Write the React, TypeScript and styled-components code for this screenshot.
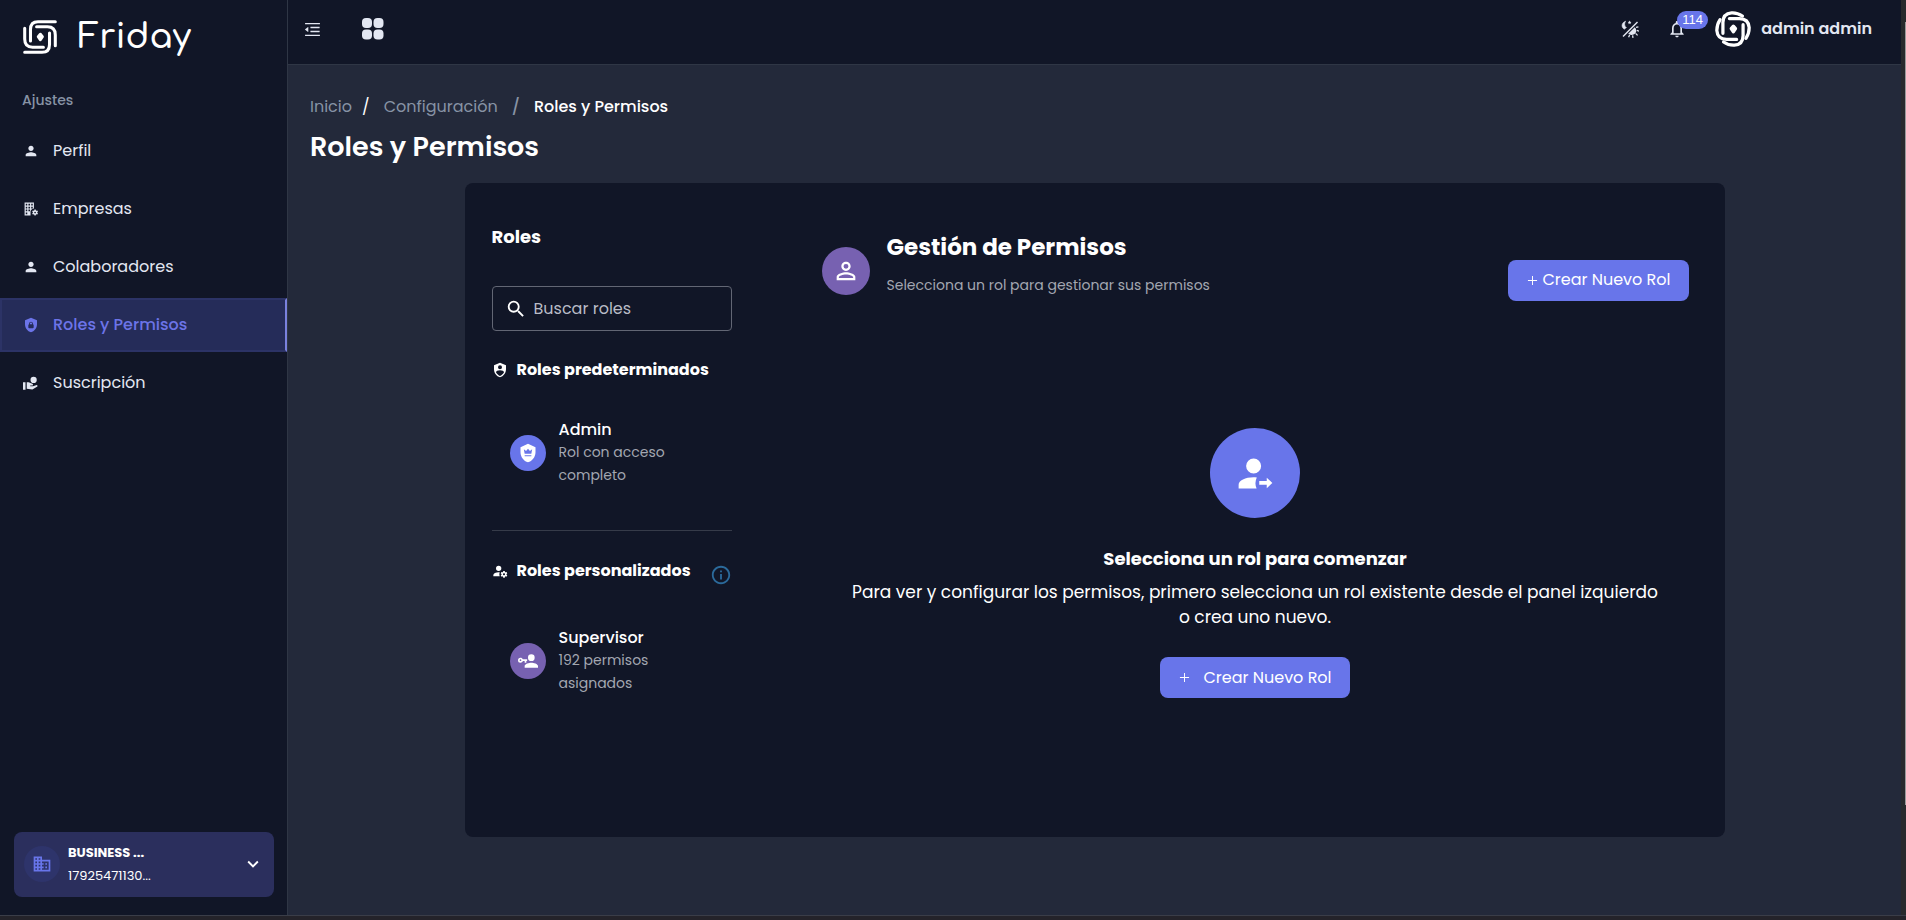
import React from 'react';
import styled, { createGlobalStyle } from 'styled-components';
import {
  MdPerson,
  MdSearch,
  MdOutlineInfo,
  MdNotificationsNone,
  MdDomain,
  MdKeyboardArrowDown,
  MdPersonOutline,
} from 'react-icons/md';
import { AiOutlineMenuFold, AiOutlinePlus } from 'react-icons/ai';

const color = {
  surface: '#111627',
  page: '#23293a',
  line: '#2f3645',
  primary: '#6875ea',
  accent: '#7761b1',
  text: '#ffffff',
  soft: '#e3e7f2',
  muted: '#a3a7b1',
  faint: '#8793a5',
};

const GlobalStyle = createGlobalStyle`
  *, *::before, *::after { box-sizing: border-box; }
  body {
    margin: 0;
    background: ${color.page};
    color: ${color.text};
    font-family: Poppins, Inter, "Liberation Sans", sans-serif;
    font-size: 16px;
    line-height: 24px;
  }
  h1, h2, h3, p, ul, ol { margin: 0; padding: 0; }
  ul, ol { list-style: none; }
  a { color: inherit; text-decoration: none; }
  button { font: inherit; color: inherit; border: 0; background: none; padding: 0; cursor: pointer; }
  svg { display: block; flex: none; }
`;

/* ---------- icons ---------- */

type IconProps = { size?: number };

const Glyph = ({ size = 16, d, children }: IconProps & { d?: string; children?: React.ReactNode }) => (
  <svg width={size} height={size} viewBox="0 0 24 24" fill="currentColor" fillRule="evenodd" aria-hidden="true">
    {d && <path d={d} />}
    {children}
  </svg>
);

const SHIELD = 'M12 1L3 5V11C3 16.55 6.84 21.74 12 23C17.16 21.74 21 16.55 21 11V5L12 1';

const COG =
  'M17 12C16.87 12 16.76 12.09 16.74 12.21L16.55 13.53C16.25 13.66 15.96 13.82 15.7 14L14.46 13.5C14.35 13.5 14.22 13.5 14.15 13.63L13.15 15.36C13.09 15.47 13.11 15.6 13.21 15.68L14.27 16.5C14.25 16.67 14.24 16.83 14.24 17C14.24 17.17 14.25 17.33 14.27 17.5L13.21 18.32C13.12 18.4 13.09 18.53 13.15 18.64L14.15 20.37C14.21 20.5 14.34 20.5 14.46 20.5L15.7 20C15.96 20.18 16.24 20.35 16.55 20.47L16.74 21.79C16.76 21.91 16.86 22 17 22H19C19.11 22 19.22 21.91 19.24 21.79L19.43 20.47C19.73 20.34 20 20.18 20.27 20L21.5 20.5C21.63 20.5 21.76 20.5 21.83 20.37L22.83 18.64C22.89 18.53 22.86 18.4 22.77 18.32L21.7 17.5C21.72 17.33 21.74 17.17 21.74 17C21.74 16.83 21.73 16.67 21.7 16.5L22.76 15.68C22.85 15.6 22.88 15.47 22.82 15.36L21.82 13.63C21.76 13.5 21.63 13.5 21.5 13.5L20.27 14C20 13.82 19.73 13.65 19.42 13.53L19.23 12.21C19.22 12.09 19.11 12 19 12H17M18 15.5C18.83 15.5 19.5 16.17 19.5 17C19.5 17.83 18.83 18.5 18 18.5C17.16 18.5 16.5 17.83 16.5 17C16.5 16.17 17.17 15.5 18 15.5Z';

const ShieldLock = (p: IconProps) => (
  <Glyph
    {...p}
    d={`${SHIELD}M12 7C13.4 7 14.8 8.1 14.8 9.5V11C15.4 11 16 11.6 16 12.3V15.8C16 16.4 15.4 17 14.7 17H9.2C8.6 17 8 16.4 8 15.7V12.2C8 11.6 8.6 11 9.2 11V9.5C9.2 8.1 10.6 7 12 7M12 8.2C11.2 8.2 10.5 8.7 10.5 9.5V11H13.5V9.5C13.5 8.7 12.8 8.2 12 8.2Z`}
  />
);

const ShieldCrown = (p: IconProps) => (
  <Glyph {...p} d={`${SHIELD}M16 16H8V14.6H16V16M16 13H8L7 7.6L9.67 9.6L12 7L14.33 9.6L17 7.6L16 13Z`} />
);

const ShieldAccount = (p: IconProps) => (
  <Glyph
    {...p}
    d={`${SHIELD}M12 5A3 3 0 0 1 15 8A3 3 0 0 1 12 11A3 3 0 0 1 9 8A3 3 0 0 1 12 5M17.13 17C15.92 18.85 14.11 20.24 12 20.92C9.89 20.24 8.08 18.85 6.87 17C6.53 16.5 6.24 16 6 15.47C6 13.82 8.71 12.47 12 12.47C15.29 12.47 18 13.79 18 15.47C17.76 16 17.47 16.5 17.13 17Z`}
  />
);

const AccountCog = (p: IconProps) => (
  <Glyph
    {...p}
    d={`M10 4A4 4 0 0 0 6 8A4 4 0 0 0 10 12A4 4 0 0 0 14 8A4 4 0 0 0 10 4M10 14C5.58 14 2 15.79 2 18V20H11.68A7 7 0 0 1 11 17A7 7 0 0 1 11.64 14.09C11.11 14.03 10.56 14 10 14${COG}`}
  />
);

const AccountKey = (p: IconProps) => (
  <Glyph
    {...p}
    d="M11 10V12H10V14H8V12H5.83C5.42 13.17 4.31 14 3 14A3 3 0 0 1 0 11A3 3 0 0 1 3 8C4.31 8 5.42 8.83 5.83 10H11M3 10A1 1 0 0 0 2 11A1 1 0 0 0 3 12A1 1 0 0 0 4 11A1 1 0 0 0 3 10M16 14C18.67 14 24 15.34 24 18V20H8V18C8 15.34 13.33 14 16 14M16 12A4 4 0 0 1 12 8A4 4 0 0 1 16 4A4 4 0 0 1 20 8A4 4 0 0 1 16 12Z"
  />
);

const AccountArrow = (p: IconProps) => (
  <Glyph
    {...p}
    d="M11 4A4 4 0 1 1 11 12A4 4 0 0 1 11 4M11 14C6.58 14 3 15.79 3 18V20H12.6A7 7 0 0 1 12.7 14.1C12.1 14 11.6 14 11 14M21 17L18 14.2V16H14V18H18V19.8Z"
  />
);

const BuildingCog = (p: IconProps) => (
  <Glyph {...p}>
    <path d="M1 1H17V11.2A7 7 0 0 0 11.2 19V23H1ZM3 3V6H5.6V3ZM7.6 3V6H10.4V3ZM12.4 3V6H15V3ZM3 8V11H5.6V8ZM7.6 8V11H10.4V8ZM12.4 8V11H15V8ZM3 13V16H5.6V13ZM7.6 13V16H10.4V13ZM3 18V21H5.6V18Z" />
    <path transform="translate(1 1)" d={COG} />
  </Glyph>
);

const HandCoin = (p: IconProps) => (
  <Glyph {...p} d="M0 10H4V22H0ZM6 10H9L15 12.4C16 12.9 16.4 14.4 15.4 15.3H11.5V16.5H16L22 14.5C23.2 15 23.6 16 23 16.8L15 21.6L6 20.4ZM17 1.2A5 5 0 1 1 17 11.2A5 5 0 0 1 17 1.2Z" />
);

const GridIcon = ({ size = 22 }: IconProps) => (
  <svg width={size} height={size} viewBox="0 0 22 22" fill="currentColor" aria-hidden="true">
    <rect width="10" height="10" rx="4" />
    <rect x="11.5" width="10" height="10" rx="4" />
    <rect y="11.5" width="10" height="10" rx="4" />
    <rect x="11.5" y="11.5" width="10" height="10" rx="4" />
  </svg>
);

const ThemeIcon = ({ size = 18 }: IconProps) => (
  <svg width={size} height={size} viewBox="0 0 18 18" fill="none" stroke="currentColor" aria-hidden="true">
    <path d="M2 16.5L16.5 2" strokeWidth="1.5" />
    <path d="M4.6 1.2C.6 2.6-.2 7 3.2 9.2L5.4 7.6C3.4 6.4 3 3.4 4.6 1.2Z" fill="currentColor" strokeWidth=".6" />
    <path d="M8.6.6L9.2 1.8L10.4 2L9.5 2.9L9.7 4.2L8.6 3.6L7.4 4.2L7.7 2.9L6.8 2L8 1.8Z" fill="currentColor" stroke="none" />
    <path d="M7.2 13.8L13.8 7.2C16.4 10 15.2 13.2 13.2 14.2C11 15.4 8.6 15 7.2 13.8Z" fill="currentColor" stroke="none" />
    <path d="M15 7.4L17.4 6.8M15.8 10.4L18 11.2M14.6 13.4L16.6 15.4M11.6 15.4L12 17.8M8.6 15L7.6 17.2" strokeWidth="1.3" />
  </svg>
);

const LogoMark = ({ size = 34, round = false }: IconProps & { round?: boolean }) => (
  <svg width={size} height={size} viewBox="0 0 100 100" fill="none" stroke="#fff" strokeWidth="9" strokeLinecap="round" aria-hidden="true">
    {round ? (
      <>
        <path d="M14 24Q5 38 5 54Q7 79 32 79H60" />
        <path d="M86 76Q95 62 95 46Q93 21 68 21H40" />
        <path d="M76 14Q62 4 46 5Q22 7 22 32V62" />
        <path d="M24 86Q38 96 54 95Q78 93 78 68V38" />
      </>
    ) : (
      <>
        <path d="M5 24V56Q5 80 28 80H60" />
        <path d="M95 76V44Q95 20 72 20H40" />
        <path d="M95 5H44Q22 5 22 28V62" />
        <path d="M5 95H56Q78 95 78 72V38" />
      </>
    )}
    <path d="M51 42L57 49L51 58L45 49Z" fill="#fff" strokeLinejoin="round" />
  </svg>
);

/* ---------- shell ---------- */

const Page = styled.div`
  display: flex;
  flex-direction: column;
  min-height: 100vh;
  border-bottom: 4px solid #24232a;
`;

const Shell = styled.div`
  flex: 1;
  display: flex;
  border-bottom: 1px solid #3a3d48;
`;

const ScrollTrack = styled.div`
  width: 5px;
  background: #282a2d;
  display: flex;
  justify-content: flex-end;
  padding: 22px 0 110px;
`;

const ScrollThumb = styled.div`
  width: 1px;
  background: #9a9a9a;
`;

const Sidebar = styled.aside`
  width: 288px;
  flex: none;
  display: flex;
  flex-direction: column;
  background: ${color.surface};
  border-right: 1px solid ${color.line};
`;

const Brand = styled.a`
  display: flex;
  align-items: center;
  gap: 21px;
  height: 74px;
  padding: 0 23px;
  font-size: 34px;
  line-height: 48px;
  font-weight: 600;
  font-family: Comfortaa, Lato, sans-serif;
`;

const NavTitle = styled.h2`
  padding: 16px 22px 14px;
  font-size: 14px;
  line-height: 20px;
  font-weight: 500;
  color: ${color.faint};
`;

const NavList = styled.ul`
  display: flex;
  flex-direction: column;
  gap: 4px;
`;

const NavLink = styled.a<{ $active?: boolean }>`
  display: flex;
  align-items: center;
  gap: 14px;
  height: 54px;
  padding: 0 20px;
  border: 2px solid ${(p) => (p.$active ? '#2c3366' : 'transparent')};
  border-right-color: ${(p) => (p.$active ? '#7a81dd' : 'transparent')};
  background: ${(p) => (p.$active ? '#252c59' : 'transparent')};
  color: ${(p) => (p.$active ? '#6c74e8' : color.soft)};
  font-weight: ${(p) => (p.$active ? 500 : 400)};
`;

const NavIcon = styled.span`
  width: 17px;
  display: flex;
  justify-content: center;
`;

const CompanyButton = styled.button`
  display: flex;
  align-items: center;
  gap: 8px;
  height: 65px;
  margin: auto 13px 18px 14px;
  padding: 0 10px 2px;
  border-radius: 8px;
  background: #2b2f5d;
  text-align: left;
`;

const CompanyText = styled.span`
  flex: 1;
  display: flex;
  flex-direction: column;
  font-size: 13px;
  line-height: 23px;
`;

const Avatar = styled.span<{ $size: number; $bg: string }>`
  flex: none;
  width: ${(p) => p.$size}px;
  height: ${(p) => p.$size}px;
  border-radius: 50%;
  background: ${(p) => p.$bg};
  display: flex;
  align-items: center;
  justify-content: center;
`;

const Content = styled.div`
  flex: 1;
  min-width: 0;
  display: flex;
  flex-direction: column;
`;

const TopBar = styled.header`
  display: flex;
  align-items: center;
  justify-content: space-between;
  height: 65px;
  padding: 0 29px 6px 15px;
  background: ${color.surface};
  border-bottom: 1px solid ${color.line};
  color: ${color.soft};
`;

const BarGroup = styled.div<{ $gap: number }>`
  display: flex;
  align-items: center;
  gap: ${(p) => p.$gap}px;
`;

const BellButton = styled.button`
  position: relative;
`;

const Badge = styled.span`
  position: absolute;
  left: 10px;
  bottom: 10px;
  padding: 0 5px;
  border-radius: 9px;
  background: ${color.primary};
  color: #fff;
  font-family: "Liberation Sans", sans-serif;
  font-size: 13px;
  line-height: 18px;
  font-weight: 500;
`;

const UserButton = styled.button`
  display: flex;
  align-items: center;
  gap: 10px;
  font-weight: 600;
`;

const Main = styled.main`
  padding: 30px 22px 77px;
`;

const Crumbs = styled.ol`
  display: flex;
  color: ${color.faint};

  li + li::before {
    content: '/';
    margin: 0 14px;
    color: ${color.faint};
  }
  li:nth-child(2)::before {
    margin: 0 14px 0 10px;
    color: #fff;
  }
  li:last-child {
    color: #fff;
    font-weight: 500;
  }
`;

const PageTitle = styled.h1`
  margin: 9px 0 17px;
  font-size: 27px;
  line-height: 38px;
  font-weight: 600;
`;

/* ---------- roles panel ---------- */

const Panel = styled.section`
  display: grid;
  grid-template-columns: 240px minmax(0, 1fr);
  column-gap: 90px;
  max-width: 1260px;
  min-height: 654px;
  margin: 0 auto;
  padding: 40px 36px 40px 27px;
  border-radius: 8px;
  background: ${color.surface};
`;

const RolesColumn = styled.div`
  display: flex;
  flex-direction: column;
`;

const ColumnTitle = styled.h2`
  font-size: 18px;
  line-height: 28px;
  font-weight: 700;
`;

const SearchField = styled.label`
  display: flex;
  align-items: center;
  gap: 7px;
  height: 45px;
  margin: 35px 0 27px;
  padding: 0 12px;
  border: 1px solid #626674;
  border-radius: 4px;
`;

const SearchInput = styled.input`
  flex: 1;
  min-width: 0;
  border: 0;
  outline: 0;
  padding: 0;
  background: none;
  color: #fff;
  font: inherit;

  &::placeholder {
    color: #b9bcc6;
    opacity: 1;
  }
`;

const GroupTitle = styled.h3`
  display: flex;
  align-items: center;
  gap: 9px;
  font-size: 16px;
  line-height: 24px;
  font-weight: 700;
`;

const GroupHeader = styled.div`
  display: flex;
  align-items: center;
  justify-content: space-between;
  margin-bottom: 4px;
`;

const InfoButton = styled.button`
  color: #2b6a9b;
  padding-top: 8px;
`;

const RoleButton = styled.button`
  display: flex;
  align-items: center;
  gap: 13px;
  margin: 25px 0 31px;
  padding: 12px 18px;
  text-align: left;
`;

const RoleText = styled.span`
  display: flex;
  flex-direction: column;
`;

const RoleName = styled.span`
  line-height: 22px;
  font-weight: 500;
`;

const RoleNote = styled.span`
  font-size: 14px;
  line-height: 23px;
  color: ${color.muted};
`;

const Divider = styled.hr`
  width: 100%;
  height: 1px;
  margin: 0 0 25px;
  border: 0;
  background: #363b49;
`;

const PermissionsColumn = styled.div`
  display: flex;
  flex-direction: column;
`;

const PermissionsHeader = styled.div`
  display: flex;
  align-items: center;
  gap: 17px;
  padding-top: 4px;
`;

const PermissionsText = styled.div`
  flex: 1;
`;

const PermissionsTitle = styled.h2`
  font-size: 23px;
  line-height: 40px;
  font-weight: 700;
`;

const PermissionsNote = styled.p`
  padding: 8px 0 20px;
  font-size: 14px;
  line-height: 20px;
  color: ${color.muted};
`;

const PrimaryButton = styled.button<{ $gap: number }>`
  display: flex;
  align-items: center;
  gap: ${(p) => p.$gap}px;
  height: 41px;
  padding: 0 18px;
  border-radius: 8px;
  background: ${color.primary};
  color: #fff;
  white-space: nowrap;
`;

const HeaderAction = styled.div`
  padding-top: 18px;
`;

const EmptyState = styled.div`
  display: flex;
  flex-direction: column;
  align-items: center;
  padding: 113px 28px 0;
  text-align: center;
`;

const EmptyTitle = styled.h3`
  margin: 27px 0 7px;
  font-size: 18px;
  line-height: 28px;
  font-weight: 700;
`;

const EmptyText = styled.p`
  margin-bottom: 27px;
  font-size: 17px;
  line-height: 25px;
`;

const navItems = [
  { label: 'Perfil', icon: <MdPerson size={16} /> },
  { label: 'Empresas', icon: <BuildingCog size={14} /> },
  { label: 'Colaboradores', icon: <MdPerson size={16} /> },
  { label: 'Roles y Permisos', icon: <ShieldLock />, active: true },
  { label: 'Suscripción', icon: <HandCoin size={15} /> },
];

type RoleProps = { name: string; note: string; bg: string; icon: React.ReactNode };

const Role = ({ name, note, bg, icon }: RoleProps) => (
  <RoleButton type="button">
    <Avatar $size={36} $bg={bg}>{icon}</Avatar>
    <RoleText>
      <RoleName>{name}</RoleName>
      <RoleNote>{note}</RoleNote>
    </RoleText>
  </RoleButton>
);

export default function App() {
  return (
    <>
      <GlobalStyle />
      <Page>
        <Shell>
          <Sidebar>
            <Brand href="#">
              <LogoMark />
              Friday
            </Brand>
            <nav>
              <NavTitle>Ajustes</NavTitle>
              <NavList>
                {navItems.map((item) => (
                  <li key={item.label}>
                    <NavLink href="#" $active={item.active}>
                      <NavIcon>{item.icon}</NavIcon>
                      {item.label}
                    </NavLink>
                  </li>
                ))}
              </NavList>
            </nav>
            <CompanyButton type="button">
              <Avatar $size={36} $bg="#2e346b">
                <MdDomain size={20} color={color.primary} />
              </Avatar>
              <CompanyText>
                <strong>BUSINESS ...</strong>
                <span>17925471130...</span>
              </CompanyText>
              <MdKeyboardArrowDown size={22} />
            </CompanyButton>
          </Sidebar>

          <Content>
            <TopBar>
              <BarGroup $gap={40}>
                <button type="button" aria-label="Contraer menú"><AiOutlineMenuFold size={19} /></button>
                <button type="button" aria-label="Aplicaciones"><GridIcon /></button>
              </BarGroup>
              <BarGroup $gap={28}>
                <button type="button" aria-label="Cambiar tema"><ThemeIcon /></button>
                <BellButton type="button" aria-label="Notificaciones">
                  <MdNotificationsNone size={20} />
                  <Badge>114</Badge>
                </BellButton>
                <UserButton type="button">
                  <LogoMark size={36} round />
                  admin admin
                </UserButton>
              </BarGroup>
            </TopBar>

            <Main>
              <nav aria-label="Ruta">
                <Crumbs>
                  <li><a href="#">Inicio</a></li>
                  <li><a href="#">Configuración</a></li>
                  <li>Roles y Permisos</li>
                </Crumbs>
              </nav>
              <PageTitle>Roles y Permisos</PageTitle>

              <Panel>
                <RolesColumn>
                  <ColumnTitle>Roles</ColumnTitle>
                  <SearchField>
                    <MdSearch size={22} />
                    <SearchInput type="text" placeholder="Buscar roles" aria-label="Buscar roles" />
                  </SearchField>
                  <GroupTitle><ShieldAccount />Roles predeterminados</GroupTitle>
                  <Role name="Admin" note="Rol con acceso completo" bg={color.primary} icon={<ShieldCrown size={20} />} />
                  <Divider />
                  <GroupHeader>
                    <GroupTitle><AccountCog />Roles personalizados</GroupTitle>
                    <InfoButton type="button" aria-label="Información"><MdOutlineInfo size={22} /></InfoButton>
                  </GroupHeader>
                  <Role name="Supervisor" note="192 permisos asignados" bg={color.accent} icon={<AccountKey size={20} />} />
                </RolesColumn>

                <PermissionsColumn>
                  <PermissionsHeader>
                    <Avatar $size={48} $bg={color.accent}><MdPersonOutline size={28} /></Avatar>
                    <PermissionsText>
                      <PermissionsTitle>Gestión de Permisos</PermissionsTitle>
                      <PermissionsNote>Selecciona un rol para gestionar sus permisos</PermissionsNote>
                    </PermissionsText>
                    <HeaderAction>
                      <PrimaryButton type="button" $gap={3}><AiOutlinePlus size={13} />Crear Nuevo Rol</PrimaryButton>
                    </HeaderAction>
                  </PermissionsHeader>
                  <EmptyState>
                    <Avatar $size={90} $bg={color.primary}><AccountArrow size={45} /></Avatar>
                    <EmptyTitle>Selecciona un rol para comenzar</EmptyTitle>
                    <EmptyText>
                      Para ver y configurar los permisos, primero selecciona un rol existente desde el panel izquierdo o crea uno nuevo.
                    </EmptyText>
                    <PrimaryButton type="button" $gap={12}><AiOutlinePlus size={13} />Crear Nuevo Rol</PrimaryButton>
                  </EmptyState>
                </PermissionsColumn>
              </Panel>
            </Main>
          </Content>
          <ScrollTrack><ScrollThumb /></ScrollTrack>
        </Shell>
      </Page>
    </>
  );
}
